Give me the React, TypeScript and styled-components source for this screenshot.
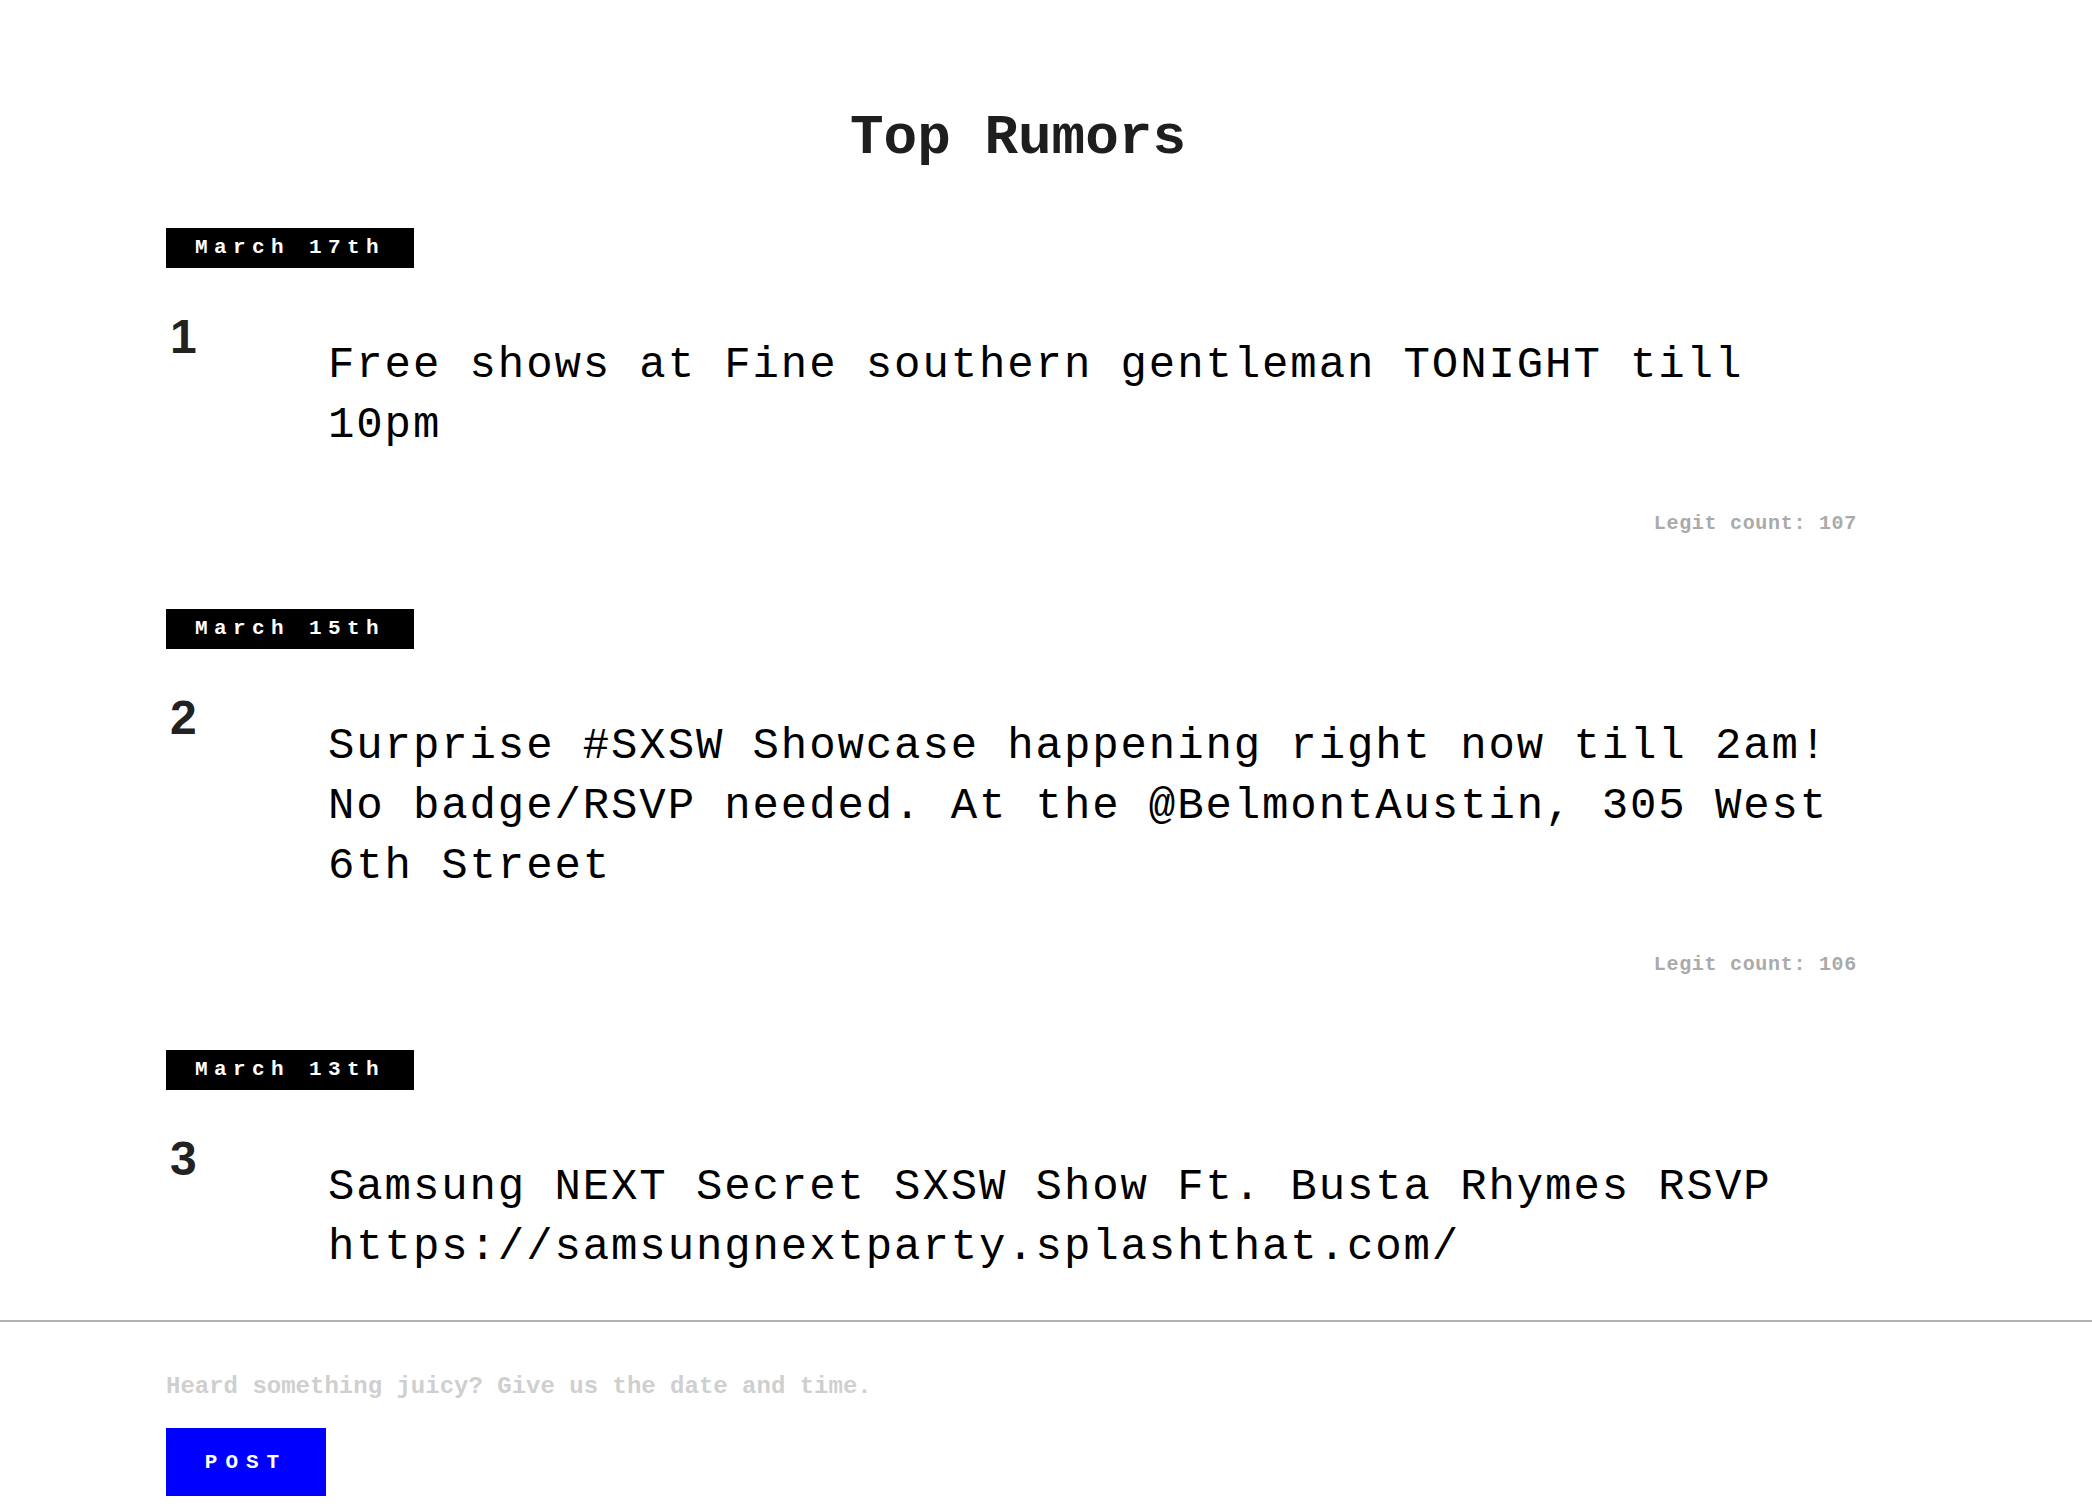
import React from "react";
import styled, { createGlobalStyle } from "styled-components";

const GlobalStyle = createGlobalStyle`
  html, body {
    margin: 0;
    padding: 0;
    background: #ffffff;
  }
  body {
    font-family: "Liberation Mono", "Courier New", monospace;
    color: #000;
  }
  * { box-sizing: border-box; }
`;

const mono = `"Courier New", "Liberation Mono", monospace`;

const Page = styled.main`
  width: 1704px;
  margin-left: 166px;
  padding: 110px 0 260px 0;
`;

const Title = styled.h1`
  margin: 0;
  font-family: ${mono};
  font-weight: 700;
  font-size: 56px;
  line-height: 56px;
  color: #1e1e1e;
  text-align: center;
`;

const List = styled.div`
  display: flex;
  flex-direction: column;
  gap: 73px;
  margin-top: 62px;
`;

const Item = styled.article`
  display: flex;
  flex-direction: column;
`;

const DateBadge = styled.div`
  align-self: flex-start;
  height: 40px;
  line-height: 40px;
  padding: 0 29px;
  background: #000;
  color: #fff;
  font-family: ${mono};
  font-weight: 700;
  font-size: 21px;
  letter-spacing: 6.4px;
  white-space: nowrap;
`;

const Row = styled.div`
  display: grid;
  grid-template-columns: 162px 1fr;
  margin-top: 45px;
`;

const Rank = styled.div`
  padding-left: 4px;
  font-family: "Helvetica Neue", "Liberation Sans", Arial, sans-serif;
  font-weight: 700;
  font-size: 48px;
  line-height: 48px;
  color: #222;
`;

const Body = styled.p`
  margin: 22px 0 0 0;
  font-family: ${mono};
  font-weight: 400;
  font-size: 44px;
  line-height: 60px;
  letter-spacing: 1.9px;
  color: #000;
`;

const Legit = styled.div`
  margin-top: 57px;
  padding-right: 13px;
  text-align: right;
  font-family: ${mono};
  font-weight: 700;
  font-size: 20px;
  line-height: 24px;
  letter-spacing: 0.7px;
  color: #aaaaaa;
`;

const Footer = styled.footer`
  position: fixed;
  left: 0;
  right: 0;
  bottom: 0;
  background: #fff;
  border-top: 2px solid #b3b3b3;
  padding: 50px 0 14px 166px;
  display: flex;
  flex-direction: column;
  align-items: flex-start;
  gap: 26px;
`;

const RumorInput = styled.input`
  width: 900px;
  height: 30px;
  padding: 0;
  margin: 0;
  border: none;
  outline: none;
  background: transparent;
  font-family: ${mono};
  font-weight: 700;
  font-size: 24px;
  line-height: 30px;
  color: #000;
  &::placeholder {
    color: #cfcfcf;
    opacity: 1;
  }
`;

const PostButton = styled.button`
  width: 160px;
  height: 68px;
  padding: 0;
  border: none;
  background: #0000ff;
  color: #fff;
  font-family: ${mono};
  font-weight: 700;
  font-size: 21px;
  letter-spacing: 8px;
  text-align: center;
  cursor: pointer;
`;

type Rumor = {
  rank: number;
  date: string;
  text: string;
  count: number | null;
};

const rumors: Rumor[] = [
  {
    rank: 1,
    date: "March 17th",
    text: "Free shows at Fine southern gentleman TONIGHT till 10pm",
    count: 107,
  },
  {
    rank: 2,
    date: "March 15th",
    text:
      "Surprise #SXSW Showcase happening right now till 2am! No badge/RSVP needed. At the @BelmontAustin, 305 West 6th Street",
    count: 106,
  },
  {
    rank: 3,
    date: "March 13th",
    text:
      "Samsung NEXT Secret SXSW Show Ft. Busta Rhymes RSVP https://samsungnextparty.splashthat.com/",
    count: null,
  },
];

export default function App() {
  return (
    <>
      <GlobalStyle />
      <Page>
        <Title>Top Rumors</Title>
        <List>
          {rumors.map((r) => (
            <Item key={r.rank}>
              <DateBadge>{r.date}</DateBadge>
              <Row>
                <Rank>{r.rank}</Rank>
                <Body>{r.text}</Body>
              </Row>
              {r.count !== null && <Legit>Legit count: {r.count}</Legit>}
            </Item>
          ))}
        </List>
      </Page>
      <Footer>
        <RumorInput placeholder="Heard something juicy? Give us the date and time." />
        <PostButton>POST</PostButton>
      </Footer>
    </>
  );
}
